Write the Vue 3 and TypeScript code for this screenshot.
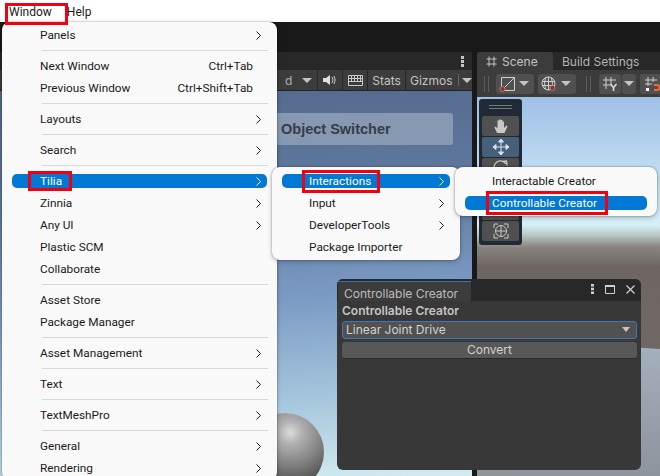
<script setup lang="ts">
type MenuRow = { label?: string; shortcut?: string; arrow?: boolean; active?: boolean; sep?: boolean }

const mainMenu: MenuRow[] = [
  { label: 'Panels', arrow: true },
  { sep: true },
  { label: 'Next Window', shortcut: 'Ctrl+Tab' },
  { label: 'Previous Window', shortcut: 'Ctrl+Shift+Tab' },
  { sep: true },
  { label: 'Layouts', arrow: true },
  { sep: true },
  { label: 'Search', arrow: true },
  { sep: true },
  { label: 'Tilia', arrow: true, active: true },
  { label: 'Zinnia', arrow: true },
  { label: 'Any UI', arrow: true },
  { label: 'Plastic SCM' },
  { label: 'Collaborate' },
  { sep: true },
  { label: 'Asset Store' },
  { label: 'Package Manager' },
  { sep: true },
  { label: 'Asset Management', arrow: true },
  { sep: true },
  { label: 'Text', arrow: true },
  { sep: true },
  { label: 'TextMeshPro', arrow: true },
  { sep: true },
  { label: 'General', arrow: true },
  { label: 'Rendering', arrow: true },
]

const tiliaMenu: MenuRow[] = [
  { label: 'Interactions', arrow: true, active: true },
  { label: 'Input', arrow: true },
  { label: 'DeveloperTools', arrow: true },
  { label: 'Package Importer' },
]

const creatorMenu: MenuRow[] = [
  { label: 'Interactable Creator' },
  { label: 'Controllable Creator', active: true },
]

const menus = [
  { name: 'main', rows: mainMenu },
  { name: 'tilia', rows: tiliaMenu },
  { name: 'creator', rows: creatorMenu },
]

// red annotation boxes drawn over the screenshot
const marks = [
  { left: 5, top: 3, width: 63, height: 22 },
  { left: 28, top: 171, width: 44, height: 20 },
  { left: 302, top: 170, width: 78, height: 23 },
  { left: 486, top: 191, width: 122, height: 24 },
]
</script>

<template>
  <div class="app">
    <div class="menubar">
      <span class="menubar-item">Window</span>
      <span class="menubar-item">Help</span>
    </div>
    <div class="band" />

    <div class="panels">
      <section class="game">
        <div class="tabstrip">
          <svg class="kebab" width="3" height="11" viewBox="0 0 3 11"><rect width="3" height="3" y="0" fill="#c4c4c4" /><rect width="3" height="3" y="4" fill="#c4c4c4" /><rect width="3" height="3" y="8" fill="#c4c4c4" /></svg>
        </div>
        <div class="game-toolbar">
          <div class="tb-cell tb-display">
            <span>d</span>
            <i class="tri" />
          </div>
          <div class="tb-cell tb-icon">
            <svg width="14" height="12" viewBox="0 0 14 12"><path d="M0 4h3l4-3v10L3 8H0z" fill="#e2e2e2" /><path d="M9 3q2 3 0 6M11 2q2.500 4 0 8" stroke="#c8c8c8" fill="none" /></svg>
          </div>
          <div class="tb-cell tb-icon tb-keys">
            <svg width="15" height="11" viewBox="0 0 15 11"><path d="M.5.500h14v10H.5zM.5 3.500h14M.5 6.500h14M3.500.500v6M6.500.500v6M9.500.500v6M12.500.500v6" stroke="#c8c8c8" fill="none" /></svg>
          </div>
          <div class="tb-cell tb-stats">Stats</div>
          <div class="tb-cell tb-gizmos">
            <span>Gizmos</span>
            <b class="tb-split" />
            <i class="tri" />
          </div>
        </div>
        <div class="game-view">
          <div class="switcher">Object Switcher</div>
          <div class="sphere" />
        </div>
      </section>

      <section class="scene">
        <div class="tabstrip scene-tabs">
          <div class="tab">
            <svg width="11" height="11" viewBox="0 0 11 11"><path d="M3 .500v10M8 .500v10M.5 3h10M.5 8h10" stroke="#c4c4c4" fill="none" /></svg>
            <span>Scene</span>
          </div>
          <span class="tab-plain">Build Settings</span>
        </div>
        <div class="scene-toolbar">
          <b class="grip" />
          <div class="sc-btn sc-wide">
            <svg width="16" height="16" viewBox="0 0 16 16"><path d="M2.500 1.500h13v13h-13zM3 14L15 2" stroke="#d0d0d0" fill="none" /><circle cx="3.500" cy="13" r="2.500" fill="#4c4c4c" stroke="#f0643c" /></svg>
            <i class="tri" />
          </div>
          <div class="sc-btn sc-wide">
            <svg width="16" height="16" viewBox="0 0 16 16"><circle cx="7.500" cy="7.500" r="6.500" stroke="#d0d0d0" fill="none" /><path d="M7.500 1v13M1 5.500h13M1 9.500h13M4.500 2q-2 5.500 0 11M10.500 2q2 5.500 0 11" stroke="#d0d0d0" fill="none" /><circle cx="11.500" cy="12" r="2.500" fill="#4c4c4c" stroke="#f0643c" /></svg>
            <i class="tri" />
          </div>
          <b class="grip grip-mid" />
          <div class="sc-btn sc-grid">
            <svg width="16" height="16" viewBox="0 0 16 16"><path d="M4 1v12M9 1v8M1 4h13M1 9h9" stroke="#d0d0d0" fill="none" /><path d="M8.500 8l3 3.500 3-3.500M11.500 11.500V15" stroke="#e0e0e0" stroke-width="1.500" fill="none" /></svg>
          </div>
          <div class="sc-btn sc-arrow"><i class="tri" /></div>
          <div class="sc-btn sc-snap">
            <svg width="16" height="16" viewBox="0 0 16 16"><path d="M4 1v9M9 1v5M1 4h12M1 8h7" stroke="#d0d0d0" fill="none" /><path d="M10 9h3a2.500 2.500 0 0 1 0 5h-3" stroke="#f0643c" stroke-width="2" fill="none" /><rect x="2" y="12" width="3" height="3" fill="#fff" /></svg>
          </div>
        </div>
        <div class="scene-view">
          <div class="plane" />
          <div class="palette">
            <div class="palette-handle" />
            <div class="tool">
              <svg width="16" height="16" viewBox="0 0 16 16"><path d="M4 15L1.500 9.500 2.500 8.500 4.500 10.500V2.500h1.500V7.500V1.500H7.800V7.500V2H9.500V8V3.500H11V10l2.300-2.500 1.200.7L11.500 15z" fill="#c8c8c8" /></svg>
            </div>
            <div class="tool tool-on">
              <svg width="16" height="16" viewBox="0 0 16 16"><path d="M8 0l2.500 3h-5zM8 16l2.500-3h-5zM0 8l3-2.500v5zM16 8l-3-2.500v5zM3 8h10M8 3v10" fill="#d6e2ee" stroke="#d6e2ee" /></svg>
            </div>
            <div class="tool">
              <svg width="16" height="16" viewBox="0 0 16 16"><path d="M2 11A6.500 6.500 0 0 1 13 4M9 1.500L13.500 1 14 5.500" stroke="#c8c8c8" stroke-width="1.300" fill="none" /></svg>
            </div>
            <div class="tool" />
            <div class="tool" />
            <div class="tool">
              <svg width="16" height="16" viewBox="0 0 16 16"><circle cx="8" cy="8" r="5.500" stroke="#c8c8c8" fill="none" /><path d="M8 2.500v11M2.500 8h11M1 5V1h4M15 11v4h-4M11 1h4v4M5 15H1v-4" stroke="#c8c8c8" fill="none" /></svg>
            </div>
          </div>
        </div>
      </section>
    </div>

    <div
      v-for="menu in menus"
      :key="menu.name"
      class="menu"
      :class="`menu-${menu.name}`"
    >
      <template v-for="(row, i) in menu.rows" :key="i">
        <div v-if="row.sep" class="menu-sep" />
        <div v-else class="menu-row" :class="{ active: row.active }">
          <span class="menu-label">{{ row.label }}</span>
          <span v-if="row.shortcut" class="menu-shortcut">{{ row.shortcut }}</span>
          <svg v-if="row.arrow" class="menu-arrow" width="5" height="9" viewBox="0 0 5 9"><path d="M.5.500l4 4-4 4" fill="none" stroke="currentColor" /></svg>
        </div>
      </template>
    </div>

    <div class="creator">
      <div class="creator-head">
        <div class="creator-tab">Controllable Creator</div>
        <div class="creator-controls">
          <svg width="3" height="10" viewBox="0 0 3 10"><rect width="3" height="2.500" fill="#d0d0d0" /><rect y="3.700" width="3" height="2.500" fill="#d0d0d0" /><rect y="7.500" width="3" height="2.500" fill="#d0d0d0" /></svg>
          <svg width="10" height="9" viewBox="0 0 10 9"><path d="M.5 1.500h9v7h-9z" fill="none" stroke="#d0d0d0" /><path d="M0 1h10" stroke="#d0d0d0" stroke-width="2" /></svg>
          <svg width="9" height="9" viewBox="0 0 9 9"><path d="M.5.500l8 8M8.500.500l-8 8" stroke="#d0d0d0" stroke-width="1.200" /></svg>
        </div>
      </div>
      <div class="creator-body">
        <div class="creator-title">Controllable Creator</div>
        <div class="creator-select">
          <span>Linear Joint Drive</span>
          <i class="tri" />
        </div>
        <div class="creator-button">Convert</div>
      </div>
    </div>

    <div
      v-for="(mark, i) in marks"
      :key="i"
      class="mark"
      :style="{ left: `${mark.left}px`, top: `${mark.top}px`, width: `${mark.width}px`, height: `${mark.height}px` }"
    />
  </div>
</template>

<style>
html, body {
  margin: 0;
  background: #191919;
}
</style>

<style scoped>
.app {
  position: relative;
  width: 660px;
  height: 476px;
  overflow: hidden;
  display: flex;
  flex-direction: column;
  background: #191919;
  font-family: Inter, "Liberation Sans", sans-serif;
  font-size: 12px;
  color: #c4c4c4;
}

/* ---------- top bar ---------- */
.menubar {
  height: 22px;
  flex: none;
  display: flex;
  gap: 15px;
  padding-left: 9px;
  background: #fff;
  font-family: Roboto, sans-serif;
  font-size: 12px;
  color: #1a1a1a;
  line-height: 24px;
}

.band {
  height: 30px;
  flex: none;
  background: #191919;
}

.panels {
  flex: 1;
  display: flex;
  gap: 5px;
  min-height: 0;
}

.tabstrip {
  height: 18px;
  flex: none;
  display: flex;
  align-items: center;
  justify-content: flex-end;
  background: #282828;
}

.kebab {
  margin-right: 8px;
}

.tri {
  display: inline-block;
  width: 0;
  height: 0;
  border-left: 5px solid transparent;
  border-right: 5px solid transparent;
  border-top: 5px solid #c4c4c4;
}

/* ---------- game panel ---------- */
.game {
  width: 472px;
  flex: none;
  display: flex;
  flex-direction: column;
}

.game-toolbar {
  height: 21px;
  flex: none;
  display: flex;
  justify-content: flex-end;
  background: #3c3c3c;
  border-bottom: 1px solid #232323;
  box-sizing: border-box;
}

.tb-cell {
  display: flex;
  align-items: center;
  padding: 0 5px;
  border-right: 1px solid #282828;
}

.tb-display {
  width: 38px;
  justify-content: space-between;
  box-sizing: border-box;
  color: #b0b0b0;
}

.tb-icon {
  width: 25px;
  justify-content: center;
  padding: 0;
  box-sizing: border-box;
}

.tb-stats {
  width: 38px;
  box-sizing: border-box;
  justify-content: center;
  padding: 0;
}

.tb-gizmos {
  width: 66px;
  box-sizing: border-box;
  border-right: 0;
  padding: 0 0 0 4px;
}

.tb-split {
  width: 1px;
  height: 12px;
  margin: 0 3px 0 5px;
  background: #6a6a6a;
}

.game-view {
  position: relative;
  flex: 1;
  padding: 22px 19px 0 0;
  background: linear-gradient(176deg, #54688c 0%, #5f7a9f 30%, #7c9bc4 55%, #a4c4dc 78%, #d2ecf0 100%);
  display: flex;
  justify-content: flex-end;
  align-items: flex-start;
}

.switcher {
  width: 172px;
  height: 32px;
  padding-left: 11px;
  border-radius: 3px;
  background: #8698b2;
  color: #363c48;
  font: bold 14.500px/32px "Liberation Sans", sans-serif;
}

.sphere {
  position: absolute;
  left: 246px;
  top: 322px;
  width: 78px;
  height: 78px;
  border-radius: 50%;
  background: radial-gradient(circle at 57% 25%, #dcdcdc 0%, #b0b0b0 16%, #848484 42%, #4e4e4e 72%, #343434 100%);
}

/* ---------- scene panel ---------- */
.scene {
  flex: 1;
  min-width: 0;
  display: flex;
  flex-direction: column;
}

.scene-tabs {
  justify-content: flex-start;
  background: #282828;
}

.tab {
  width: 76px;
  height: 18px;
  display: flex;
  align-items: center;
  gap: 5px;
  padding-left: 9px;
  box-sizing: border-box;
  background: #3c3c3c;
  border-radius: 3px 3px 0 0;
}

.tab-plain {
  margin-left: 9px;
  color: #b4b4b4;
  white-space: nowrap;
}

.scene-toolbar {
  height: 27px;
  flex: none;
  display: flex;
  align-items: center;
  padding-left: 7px;
  background: #3c3c3c;
  overflow: hidden;
}

.grip {
  flex: none;
  width: 3px;
  height: 16px;
  border-left: 1px solid #5c5c5c;
  border-right: 1px solid #5c5c5c;
  margin-right: 7px;
}

.grip-mid {
  margin: 0 8px 0 10px;
}

.sc-btn {
  flex: none;
  height: 20px;
  display: flex;
  align-items: center;
  box-sizing: border-box;
  background: #505050;
  border-radius: 3px;
}

.sc-wide {
  width: 38px;
  justify-content: space-between;
  padding: 0 5px 0 3px;
  margin-right: 4px;
}

.sc-wide:nth-of-type(2) {
  margin-right: 0;
}

.sc-grid {
  width: 22px;
  justify-content: center;
}

.sc-arrow {
  width: 14px;
  margin: 0 4px 0 1px;
  justify-content: center;
}

.sc-snap {
  width: 30px;
  padding-left: 4px;
}

.scene-view {
  position: relative;
  flex: 1;
  background: linear-gradient(180deg, #9fc0e6 0px, #d6f0f8 128px, #b8c8c8 138px, #8a8580 150px, #6d6662 170px, #6f6864 260px);
  padding: 2px 0 0 2px;
}

.plane {
  position: absolute;
  left: 0;
  right: 0;
  top: 240px;
  bottom: 0;
  clip-path: polygon(0 0, 100% 12px, 100% 100%, 0 100%);
  background: linear-gradient(180deg, #a6b2c0 0%, #8c949c 100%);
}

.palette {
  position: relative;
  width: 43px;
  height: 146px;
  box-sizing: border-box;
  padding: 0 3px;
  display: flex;
  flex-direction: column;
  gap: 1px;
  border-radius: 3px;
  background: #1f2a35;
}

.palette-handle {
  flex: none;
  box-sizing: border-box;
  height: 4px;
  margin: 6px 7px 6px;
  border-top: 1px solid #707880;
  border-bottom: 1px solid #707880;
}

.tool {
  height: 20px;
  flex: none;
  display: flex;
  align-items: center;
  justify-content: center;
  border-radius: 2px;
  background: #505050;
}

.tool-on {
  background: #46607a;
}

/* ---------- windows style menus ---------- */
.menu {
  position: absolute;
  box-sizing: border-box;
  padding: 1.500px 0;
  border-radius: 8px;
  background: #f9f9f9;
  box-shadow: 0 0 2px rgba(0, 0, 0, 0.45), 0 2px 5px rgba(0, 0, 0, 0.2);
  font-family: Roboto, sans-serif;
  font-size: 11.800px;
  color: #1a1a1a;
}

.menu-main {
  left: 2px;
  top: 22px;
  width: 275px;
}

.menu-tilia {
  left: 272px;
  top: 167px;
  width: 188px;
  height: 93px;
  padding-top: 3px;
}

.menu-creator {
  left: 455px;
  top: 167px;
  width: 202px;
  height: 49px;
  padding-top: 3px;
}

.menu-row {
  position: relative;
  height: 22px;
  display: flex;
  align-items: center;
  white-space: nowrap;
  z-index: 0;
}

.menu-row.active {
  color: #fff;
}

.menu-row.active::before {
  content: "";
  position: absolute;
  z-index: -1;
  top: 4px;
  bottom: 4px;
  left: 10px;
  right: 10px;
  border-radius: 5px;
  background: #0078d4;
}

.menu-label {
  margin-left: 38px;
}

.menu-tilia .menu-label {
  margin-left: 37px;
}

.menu-creator .menu-label {
  margin-left: 37px;
}

.menu-shortcut {
  position: absolute;
  right: 24px;
}

.menu-arrow {
  position: absolute;
  right: 16px;
  top: 7px;
}

.menu-sep {
  height: 1px;
  margin: 4px 9px 4px 40px;
  background: #d8d8d8;
}

/* ---------- floating editor window ---------- */
.creator {
  position: absolute;
  left: 337px;
  top: 279px;
  width: 304px;
  height: 191px;
  display: flex;
  flex-direction: column;
  overflow: hidden;
  border-radius: 6px;
  background: #383838;
}

.creator-head {
  height: 22px;
  flex: none;
  display: flex;
  justify-content: space-between;
  background: #282828;
}

.creator-tab {
  width: 133px;
  margin-left: 1px;
  padding: 3px 0 0 6px;
  box-sizing: border-box;
  border-top: 1px solid #3a72b0;
  margin-top: 2px;
  background: #3c3c3c;
  color: #bcbcbc;
  line-height: 17px;
  white-space: nowrap;
}

.creator-controls {
  display: flex;
  align-items: center;
  gap: 11px;
  padding: 0 6px 2px 0;
}

.creator-body {
  display: flex;
  flex-direction: column;
  padding: 1px 4px 0 5px;
}

.creator-title {
  font-weight: 600;
  color: #c4c4c4;
  line-height: 18px;
  height: 18px;
}

.creator-select {
  height: 18px;
  margin-top: 1px;
  box-sizing: border-box;
  display: flex;
  align-items: center;
  justify-content: space-between;
  padding: 0 6px 1px 3px;
  border: 1px solid #3a79bb;
  border-radius: 3px;
  background: #515151;
  color: #d2d2d2;
}

.creator-select .tri {
  border-left-width: 4px;
  border-right-width: 4px;
  border-top-width: 5px;
}

.creator-button {
  height: 17px;
  margin-top: 3px;
  border-radius: 3px;
  background: #585858;
  border-bottom: 1px solid #2a2a2a;
  box-sizing: border-box;
  text-align: center;
  line-height: 16px;
  color: #d2d2d2;
}

.mark {
  position: absolute;
  box-sizing: border-box;
  border: 3px solid #f00010;
}
</style>
